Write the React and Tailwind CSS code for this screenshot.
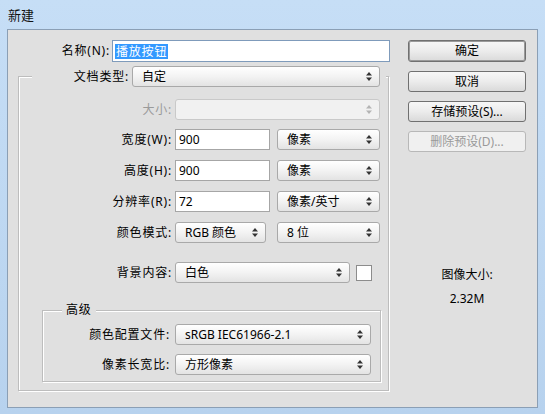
import React from "react";

const font = { fontFamily: '"Noto Sans", "Noto Sans CJK SC", sans-serif' };

const Arrows = ({ disabled }) => (
    <svg width="6" height="9" viewBox="0 0 6 9" className="shrink-0">
        <path d="M3 0 L6 3.5 L0 3.5 Z" fill={disabled ? "#b4b4b4" : "#333"} />
        <path d="M0 5.5 L6 5.5 L3 9 Z" fill={disabled ? "#b4b4b4" : "#333"} />
    </svg>
);

const Select = ({ value, width, disabled }) => (
    <div
        className={`flex h-[21px] items-center justify-between rounded-[3px] border pl-[9px] pr-[7px] ${
            disabled
                ? "border-[#c9c9c9] bg-[#f1f1f1] text-[#9a9a9a]"
                : "border-[#a9a9a9] bg-linear-to-b from-white via-[#f3f3f3] to-[#e3e3e3] text-black"
        }`}
        style={{ width }}
    >
        <span className="leading-none">{value}</span>
        <Arrows disabled={disabled} />
    </div>
);

const Input = ({ value, width }) => (
    <div
        className="flex h-[21px] items-center border border-[#a6a6a6] bg-white pl-[3px]"
        style={{ width }}
    >
        {value}
    </div>
);

const Row = ({ label, disabled, labelWidth = 153, gap = 3, children, className = "" }) => (
    <div className={`flex h-[21px] items-center ${className}`}>
        <div
            className={`shrink-0 text-right tracking-[0.8px] ${disabled ? "text-[#9a9a9a]" : ""}`}
            style={{ width: labelWidth, marginRight: gap }}
        >
            {label}
        </div>
        {children}
    </div>
);

const Button = ({ children, primary, disabled, className = "" }) => (
    <div
        className={`flex w-[118px] items-center justify-center rounded-[3px] border ${
            primary
                ? "h-[22px] border-[#3c3c3c] shadow-[inset_0_0_0_1px_#9a9a9a]"
                : "h-[21px]"
        } ${
            disabled
                ? "border-[#b8b8b8] bg-[#f0f0f0] text-[#9a9a9a]"
                : "border-[#707070] bg-linear-to-b from-[#f7f7f7] via-[#ececec] to-[#dadada]"
        } ${className}`}
    >
        {children}
    </div>
);

const groupBox =
    "border border-[#bdbdbd] shadow-[inset_1px_1px_0_#ffffff,1px_1px_0_#ffffff]";

export default function App() {
    return (
        <div
            className="h-[414px] w-[545px] overflow-hidden bg-linear-to-b from-[#c6def6] to-[#b7d2ee] text-[12px] text-black"
            style={font}
        >
            <div className="flex h-[29px] items-center pl-[8px] pt-[2px] text-[13px] text-[#111]">
                新建
            </div>
            <div className="ml-[7px] flex h-[379px] w-[531px] border border-[#8b9fb5] bg-[#e0e0e0]">
                <div className="w-[400px] pt-[10px]">
                    <Row label="名称(N):" labelWidth={102} gap={2} className="h-[22px]">
                        <div className="flex h-[22px] w-[278px] items-center border border-[#7f9bbb] bg-white pl-[2px]">
                            <span className="bg-[#3399ff] px-[1px] leading-[15px] tracking-[0.8px] text-white">
                                播放按钮
                            </span>
                        </div>
                    </Row>

                    <fieldset className={`ml-[10px] mt-[4px] w-[371px] pb-[8px] ${groupBox}`}>
                        <legend className="ml-[13px] bg-[#e0e0e0] pr-[6px]">
                            <Row label="文档类型:" labelWidth={97}>
                                <Select value="自定" width={248} />
                            </Row>
                        </legend>

                        <Row label="大小:" disabled className="mt-[12px]">
                            <Select value="" width={205} disabled />
                        </Row>
                        <Row label="宽度(W):" className="mt-[9px]">
                            <Input value="900" width={95} />
                            <div className="w-[7px]" />
                            <Select value="像素" width={103} />
                        </Row>
                        <Row label="高度(H):" className="mt-[10px]">
                            <Input value="900" width={95} />
                            <div className="w-[7px]" />
                            <Select value="像素" width={103} />
                        </Row>
                        <Row label="分辨率(R):" className="mt-[10px]">
                            <Input value="72" width={95} />
                            <div className="w-[7px]" />
                            <Select value="像素/英寸" width={103} />
                        </Row>
                        <Row label="颜色模式:" className="mt-[10px]">
                            <Select value="RGB 颜色" width={91} />
                            <div className="w-[11px]" />
                            <Select value="8 位" width={103} />
                        </Row>
                        <Row label="背景内容:" className="mt-[19px]">
                            <Select value="白色" width={175} />
                            <div className="ml-[6px] h-[16px] w-[16px] border border-[#8c8c8c] bg-white" />
                        </Row>

                        <fieldset className={`ml-[23px] mt-[19px] w-[339px] pb-[6px] ${groupBox}`}>
                            <legend className="ml-[19px] bg-[#e0e0e0] px-[4px] leading-[16px] tracking-[0.8px]">
                                高级
                            </legend>
                            <Row label="颜色配置文件:" labelWidth={127} gap={5} className="mt-[6px]">
                                <Select value="sRGB IEC61966-2.1" width={196} />
                            </Row>
                            <Row label="像素长宽比:" labelWidth={127} gap={5} className="mt-[9px]">
                                <Select value="方形像素" width={196} />
                            </Row>
                        </fieldset>
                    </fieldset>
                </div>

                <div className="flex w-[118px] flex-col pt-[10px]">
                    <Button primary>确定</Button>
                    <Button className="mt-[9px]">取消</Button>
                    <Button className="mt-[9px]">存储预设(S)...</Button>
                    <Button className="mt-[9px]" disabled>
                        删除预设(D)...
                    </Button>
                    <div className="mt-[115px] text-center leading-[16px]">图像大小:</div>
                    <div className="mt-[8px] text-center leading-[16px]">2.32M</div>
                </div>
            </div>
        </div>
    );
}
